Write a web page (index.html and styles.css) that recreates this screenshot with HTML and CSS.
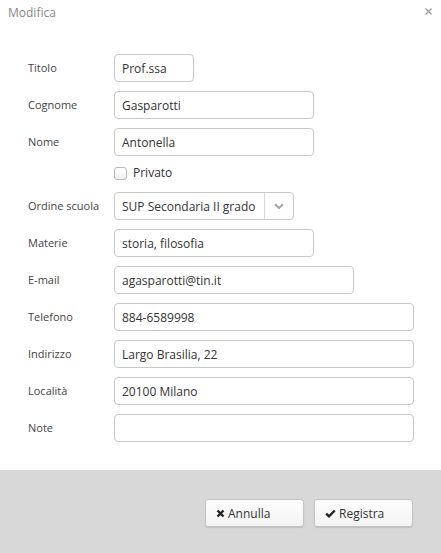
FILE: index.html
```html
<!DOCTYPE html>
<html lang="it">
<head>
<meta charset="utf-8">
<title>Modifica</title>
<link rel="stylesheet" href="styles.css">
</head>
<body>
<div class="dialog">
  <div class="header">
    <span class="title">Modifica</span>
    <span class="close"><svg width="7" height="7" viewBox="0 0 7 7"><path d="M0.5 0.5L6.5 6.5M6.5 0.5L0.5 6.5" stroke="#9a9a9a" stroke-width="1.1" fill="none"/></svg></span>
  </div>
  <form class="form">
    <div class="row"><label class="lbl">Titolo</label><div class="field w80">Prof.ssa</div></div>
    <div class="row"><label class="lbl">Cognome</label><div class="field w200">Gasparotti</div></div>
    <div class="row"><label class="lbl">Nome</label><div class="field w200">Antonella</div></div>
    <div class="row check-row"><span class="lbl"></span><span class="checkbox"></span><span class="check-text">Privato</span></div>
    <div class="row"><label class="lbl">Ordine scuola</label>
      <div class="select w180"><span class="select-val">SUP Secondaria II grado</span><span class="select-btn"><svg width="10" height="7" viewBox="0 0 10 7"><path d="M1 1.2L5 5L9 1.2" stroke="#a8a8a8" stroke-width="2" fill="none"/></svg></span></div>
    </div>
    <div class="row"><label class="lbl">Materie</label><div class="field w200">storia, filosofia</div></div>
    <div class="row"><label class="lbl">E-mail</label><div class="field w240">agasparotti@tin.it</div></div>
    <div class="row"><label class="lbl">Telefono</label><div class="field w300">884-6589998</div></div>
    <div class="row"><label class="lbl">Indirizzo</label><div class="field w300">Largo Brasilia, 22</div></div>
    <div class="row"><label class="lbl">Località</label><div class="field w300">20100 Milano</div></div>
    <div class="row"><label class="lbl">Note</label><div class="field w300"></div></div>
  </form>
  <div class="footer">
    <button class="btn" type="button"><svg class="ico" width="9" height="9" viewBox="0 0 9 9"><path d="M1.5 1.5L7.5 7.5M7.5 1.5L1.5 7.5" stroke="#222" stroke-width="2.4" fill="none"/></svg>Annulla</button>
    <button class="btn" type="button"><svg class="ico" width="11" height="9" viewBox="0 0 11 9"><path d="M1.2 4.6L4 7.3L9.8 1.5" stroke="#222" stroke-width="2.4" fill="none"/></svg>Registra</button>
  </div>
</div>
</body>
</html>
```
FILE: styles.css
```css
html, body {
  margin: 0;
  padding: 0;
  background: #fff;
}
body {
  font-family: "Open Sans", "Liberation Sans", sans-serif;
  color: #333;
}
.dialog {
  width: 441px;
  height: 553px;
  display: flex;
  flex-direction: column;
}
.header {
  height: 24px;
  display: flex;
  align-items: center;
  justify-content: space-between;
  padding: 0 9px 0 8px;
}
.title {
  font-size: 12px;
  color: #888;
}
.close {
  display: flex;
  margin-top: -2px;
}
.form {
  flex: 1;
  padding-top: 30px;
  display: flex;
  flex-direction: column;
  gap: 9px;
}
.row {
  display: flex;
  align-items: center;
  height: 28px;
}
.lbl {
  width: 86px;
  padding-left: 28px;
  font-size: 11px;
  color: #444;
  flex-shrink: 0;
  margin-top: -2px;
}
.field {
  box-sizing: border-box;
  height: 28px;
  border: 1px solid #c8c8c8;
  border-radius: 4px;
  padding: 1px 7px 0;
  font-size: 12px;
  line-height: 26px;
  color: #333;
  background: #fff;
}
.w80 { width: 80px; }
.w180 { width: 180px; }
.w200 { width: 200px; }
.w240 { width: 240px; }
.w300 { width: 300px; }
.check-row {
  height: 18px;
}
.checkbox {
  box-sizing: border-box;
  width: 13px;
  height: 13px;
  border: 1px solid #b8b8b8;
  border-radius: 3px;
  background: linear-gradient(#fff, #f0f0f0);
  margin-right: 6px;
  margin-top: -2px;
}
.check-text {
  font-size: 12px;
  color: #333;
  margin-top: -3px;
}
.select {
  box-sizing: border-box;
  height: 28px;
  border: 1px solid #c8c8c8;
  border-radius: 4px;
  display: flex;
  font-size: 12px;
  color: #333;
}
.select-val {
  flex: 1;
  padding: 1px 7px 0;
  line-height: 26px;
  border-right: 1px solid #d8d8d8;
}
.select-btn {
  width: 28px;
  display: flex;
  align-items: center;
  justify-content: center;
}
.footer {
  height: 83px;
  background: #d8d8d8;
  display: flex;
  justify-content: flex-end;
  align-items: flex-start;
  padding: 29px 28px 0 0;
  box-sizing: border-box;
  gap: 10px;
}
.btn {
  box-sizing: border-box;
  width: 99px;
  height: 28px;
  border: 1px solid #c4c4c4;
  border-radius: 3px;
  background: linear-gradient(#fdfdfd, #f3f3f3);
  box-shadow: 0 1px 1px rgba(0,0,0,0.12);
  font-family: "Open Sans", "Liberation Sans", sans-serif;
  font-size: 12px;
  color: #333;
  display: flex;
  align-items: center;
  padding: 0 0 0 10px;
  text-align: left;
}
.ico {
  margin-right: 3px;
}
```
